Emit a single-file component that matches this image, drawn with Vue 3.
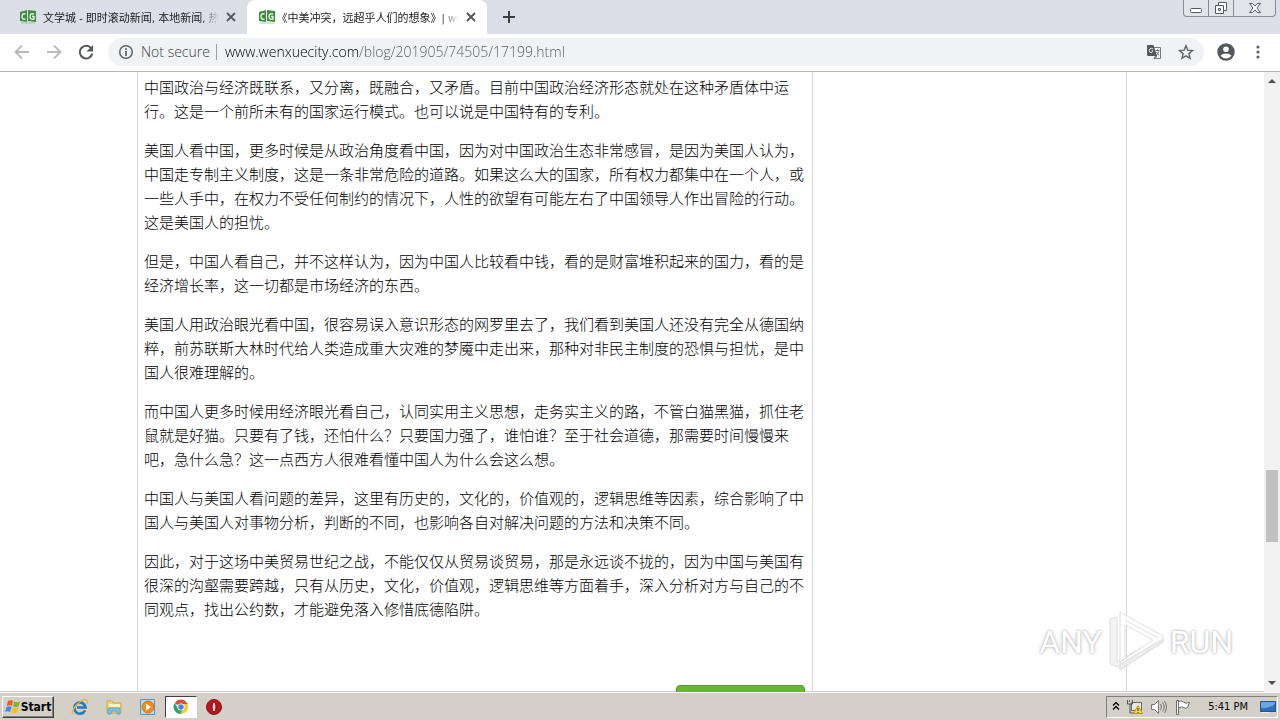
<script setup>
import { ref } from 'vue'

const url = ref('www.wenxuecity.com/blog/201905/74505/17199.html')
const tabs = [
  { title: '文学城 - 即时滚动新闻, 本地新闻, 热', active: false },
  { title: '《中美冲突，远超乎人们的想象》| ww', active: true },
]
const paragraphs = [
  '中国政治与经济既联系，又分离，既融合，又矛盾。目前中国政治经济形态就处在这种矛盾体中运行。这是一个前所未有的国家运行模式。也可以说是中国特有的专利。',
  '美国人看中国，更多时候是从政治角度看中国，因为对中国政治生态非常感冒，是因为美国人认为，中国走专制主义制度，这是一条非常危险的道路。如果这么大的国家，所有权力都集中在一个人，或一些人手中，在权力不受任何制约的情况下，人性的欲望有可能左右了中国领导人作出冒险的行动。这是美国人的担忧。',
  '但是，中国人看自己，并不这样认为，因为中国人比较看中钱，看的是财富堆积起来的国力，看的是经济增长率，这一切都是市场经济的东西。',
  '美国人用政治眼光看中国，很容易误入意识形态的网罗里去了，我们看到美国人还没有完全从德国纳粹，前苏联斯大林时代给人类造成重大灾难的梦魇中走出来，那种对非民主制度的恐惧与担忧，是中国人很难理解的。',
  '而中国人更多时候用经济眼光看自己，认同实用主义思想，走务实主义的路，不管白猫黑猫，抓住老鼠就是好猫。只要有了钱，还怕什么？只要国力强了，谁怕谁？至于社会道德，那需要时间慢慢来吧，急什么急？这一点西方人很难看懂中国人为什么会这么想。',
  '中国人与美国人看问题的差异，这里有历史的，文化的，价值观的，逻辑思维等因素，综合影响了中国人与美国人对事物分析，判断的不同，也影响各自对解决问题的方法和决策不同。',
  '因此，对于这场中美贸易世纪之战，不能仅仅从贸易谈贸易，那是永远谈不拢的，因为中国与美国有很深的沟壑需要跨越，只有从历史，文化，价值观，逻辑思维等方面着手，深入分析对方与自己的不同观点，找出公约数，才能避免落入修惜底德陷阱。',
]
</script>

<template>
  <div class="screen" lang="zh-CN">
    <header class="tabstrip">
      <div v-for="t in tabs" :key="t.title" class="tab" :class="{ active: t.active }">
        <svg class="favicon" width="16" height="14" viewBox="0 0 16 14" aria-hidden="true">
          <path d="M0 2 7 0v12l-7-1zM8 0l8 1v11l-8-1z" fill="#3f8d45" />
          <path d="M5.500 4Q2 3 2 6.500T5.500 9M14 4q-4-1-4 2.500T14 9V6.500h-2" fill="none" stroke="#e5f4df" stroke-width="1.400" />
          <path d="M1 13h14" stroke="#a9c9a5" />
        </svg>
        <button class="tab-title">{{ t.title }}</button>
        <button class="close" aria-label="Close tab">
          <svg width="10" height="10" viewBox="0 0 10 10"><path d="m1 1 8 8M9 1 1 9" stroke="#54585d" stroke-width="1.800" /></svg>
        </button>
      </div>
      <button class="newtab" aria-label="New tab">
        <svg width="14" height="14" viewBox="0 0 14 14"><path d="M7 1v12M1 7h12" stroke="#3c4043" stroke-width="2" /></svg>
      </button>
      <div class="caption">
        <button aria-label="Minimize"><svg width="14" height="16" viewBox="0 0 14 16"><rect x="1.500" y="8.500" width="11" height="4" rx="1" fill="#fff" stroke="#52586a" /></svg></button>
        <button aria-label="Restore"><svg width="14" height="16" viewBox="0 0 14 16"><path d="M4.500 2.500h8v8h-8z" fill="#fff" stroke="#52586a" /><path d="M1.500 5.500h8v8h-8z" fill="#fff" stroke="#52586a" /><path d="M4.500 8.500h2v2h-2z" fill="none" stroke="#52586a" /></svg></button>
        <button class="wide" aria-label="Close"><svg width="14" height="16" viewBox="0 0 14 16"><path d="M1.500 3.500h3L7 6l2.500-2.500h3L9 8l3.500 4.500h-3L7 10l-2.500 2.500h-3L5 8z" fill="#fff" stroke="#52586a" /></svg></button>
      </div>
    </header>

    <nav class="toolbar">
      <button class="nav" aria-label="Back"><svg width="16" height="16" viewBox="0 0 16 16"><path d="M15 8H2M8 1.500 1.500 8 8 14.500" fill="none" stroke="#b8babd" stroke-width="1.800" /></svg></button>
      <button class="nav" aria-label="Forward"><svg width="16" height="16" viewBox="0 0 16 16"><path d="M1 8h13M8 1.500 14.500 8 8 14.500" fill="none" stroke="#b8babd" stroke-width="1.800" /></svg></button>
      <button class="nav" aria-label="Reload"><svg width="16" height="16" viewBox="0 0 16 16"><path d="M13.300 4.500A6.300 6.300 0 1 0 14.300 9.500" fill="none" stroke="#55595e" stroke-width="2" /><path d="M15 1v6.500H8.500z" fill="#55595e" /></svg></button>
      <div class="omnibox">
        <svg width="16" height="16" viewBox="0 0 16 16" aria-hidden="true"><circle cx="8" cy="8" r="6.300" fill="none" stroke="#5f6368" stroke-width="1.500" /><path d="M8 7v5M8 4v1.700" stroke="#5f6368" stroke-width="1.700" /></svg>
        <label class="secure" for="url">Not secure</label>
        <input id="url" v-model="url" class="url" type="text" spellcheck="false" />
        <button class="tool" aria-label="Translate this page">
          <svg width="16" height="16" viewBox="0 0 16 16"><path d="M6.500 3.500h8v11H8.500" fill="#fff" stroke="#777b80" /><path d="M2 1h5.500l3.500 11H2Q1 12 1 11V2q0-1 1-1z" fill="#54585d" /><path d="M7 5Q5 3.500 3.800 5T4 8.300Q6 9.500 7 7H5.500" fill="none" stroke="#e6e8ea" /><path d="M9.500 6.500h4M11.500 5.500v1M13 7q-1 3-2.500 4M10.500 8l2.500 3.500M8 15l1-2.500h2z" fill="none" stroke="#777b80" /></svg>
        </button>
        <button class="tool" aria-label="Bookmark this page">
          <svg width="16" height="16" viewBox="0 0 16 16"><path d="m8 1.700 1.800 4.400 4.800.4-3.700 3.100 1.200 4.700L8 11.800l-4.100 2.500 1.200-4.700-3.700-3.100 4.800-.4z" fill="none" stroke="#5f6368" stroke-width="1.400" /></svg>
        </button>
      </div>
      <button class="profile" aria-label="Profile">
        <svg width="18" height="18" viewBox="0 0 18 18"><circle cx="9" cy="9" r="8.700" fill="#54585d" /><circle cx="9" cy="6.300" r="2.800" fill="#fff" /><path d="M3.500 12.800q2-2.200 5.500-2.200t5.500 2.200Q12.500 15.500 9 15.500t-5.500-2.700z" fill="#fff" /></svg>
      </button>
      <button class="menu" aria-label="Menu">
        <svg width="4" height="16" viewBox="0 0 4 16" fill="#5f6368"><circle cx="2" cy="3" r="1.600" /><circle cx="2" cy="8" r="1.600" /><circle cx="2" cy="13" r="1.600" /></svg>
      </button>
    </nav>

    <div class="viewport">
      <main class="page">
        <div class="container">
          <article class="article">
            <p v-for="(p, i) in paragraphs" :key="i">{{ p }}</p>
            <div class="action-row"><button class="green" aria-label="More"></button></div>
          </article>
          <aside class="aside"></aside>
        </div>
      </main>
      <div class="scrollbar">
        <svg width="16" height="16" viewBox="0 0 16 16"><path d="m4 11 4-4 4 4z" fill="#505050" /></svg>
        <div class="track"><div class="thumb"></div></div>
        <svg width="16" height="16" viewBox="0 0 16 16"><path d="m4 5 4 4 4-4z" fill="#505050" /></svg>
      </div>
      <div class="watermark">
        <span>ANY</span>
        <svg width="58" height="64" viewBox="0 0 58 64" aria-hidden="true">
          <g fill="#fff" stroke="#d8d8d8" stroke-linejoin="round">
            <path d="M3 9 10 7v45l20-12 23-12v5L11 57l-8-3z" fill="#f1f1f1" />
            <path d="M13 2 56 26v6L13 60v-8l33-22-28-15v34l-5 3z" />
            <path d="m18 10 33 18" fill="none" />
            <path d="m13 60 43-28v-3L13 54z" fill="#e8e8e8" />
          </g>
        </svg>
        <span>RUN</span>
      </div>
    </div>

    <footer class="taskbar">
      <button class="start">
        <svg width="16" height="16" viewBox="0 0 16 16" aria-hidden="true"><path d="M3 2q3-1.500 5 0L6.800 7q-2-1.500-5 0z" fill="#ec5b28" /><path d="M9 2.500q3 1.500 6 0L13.500 7.500q-3 1.500-5.500 0z" fill="#7cb82f" /><path d="M1.500 8q3-1.500 5 0l-1.300 5q-2-1.500-5 0z" fill="#3a8de0" /><path d="M7.700 8.500q3 1.500 5.700 0L12 13.500q-3 1.500-5.500 0z" fill="#f9bd1c" /></svg>
        Start
      </button>
      <div class="apps">
        <button class="app" aria-label="Internet Explorer">
          <svg width="18" height="18" viewBox="0 0 18 18"><path d="M14 12.500A5.600 5.600 0 1 1 14.500 9.500H6" fill="none" stroke="#1c7cc4" stroke-width="2.700" /><path d="M2 16Q-.5 14 5.500 7T16 2q1.500 1-.7 4" fill="none" stroke="#e9b72f" stroke-width="1.300" /></svg>
        </button>
        <button class="app" aria-label="Windows Explorer">
          <svg width="18" height="18" viewBox="0 0 18 18"><path d="M2 3h5l1 2h8v10H2z" fill="#efd576" stroke="#cba943" /><path d="M4 6h11v3H4z" fill="#fff4bc" /><path d="M3 16v-5q0-1 1-1h10q1 0 1 1v5h-3v-3H6v3z" fill="#82c3e3" stroke="#5a9fc5" /></svg>
        </button>
        <button class="app" aria-label="Media Player">
          <svg width="18" height="18" viewBox="0 0 18 18"><path d="M1.500 1.500h14v15h-14z" fill="#b9dcf5" stroke="#5397cc" /><circle cx="9" cy="9" r="6" fill="#f28b1d" stroke="#d87412" /><path d="m7 5.500 5 3.500-5 3.500z" fill="#fff" /></svg>
        </button>
        <button class="app pressed" aria-label="Chrome">
          <svg width="16" height="16" viewBox="0 0 16 16"><path d="M8 8 1.700 4.200A7 7 0 0 1 14.500 5H8z" fill="#dd4b3c" /><path d="M8 5h6.500A7 7 0 0 1 7.500 15L11 9.500z" fill="#f7c92d" /><path d="M1.700 4.200A7 7 0 0 0 7.500 15l3.300-5.500L5 9z" fill="#37a35a" /><circle cx="8" cy="8" r="3.500" fill="#fff" /><circle cx="8" cy="8" r="2.700" fill="#4285e8" /></svg>
        </button>
        <button class="app" aria-label="Opera">
          <svg width="18" height="18" viewBox="0 0 18 18"><circle cx="9" cy="9" r="7.500" fill="#b9151c" stroke="#8f1116" /><ellipse cx="9" cy="9" rx="2" ry="5" fill="#e9d6d2" stroke="#740b10" /></svg>
        </button>
      </div>
      <div class="tray">
        <button aria-label="Show hidden icons"><svg width="8" height="10" viewBox="0 0 8 10"><path d="m1 3.500 3-3 3 3M1 7.500l3-3 3 3" fill="none" stroke="#000" stroke-width="1.300" /></svg></button>
        <button aria-label="Network"><svg width="18" height="16" viewBox="0 0 18 16"><path d="M5.500 3.500h10v8h-10z" fill="#e8e8e4" stroke="#666" /><path d="M1.500 1v4h5V1M4 5v9h4M3.500 1v2" fill="none" stroke="#555" /><path d="m12 6.500 4.500 8h-9z" fill="#ffe12b" stroke="#b49b13" /><path d="M12 9v3m0 1v1" stroke="#222" /></svg></button>
        <button aria-label="Volume"><svg width="18" height="16" viewBox="0 0 18 16"><path d="M1.500 5.500h3l4-4v13l-4-4h-3z" fill="#fff" stroke="#777" /><path d="M10.500 5q2 3 0 6M12.500 3.500q3.500 4.500 0 9M14.500 2q4 6 0 12" fill="none" stroke="#777" /></svg></button>
        <button aria-label="Action Center"><svg width="18" height="16" viewBox="0 0 18 16"><path d="M2.500 1.500h2v14h-2zM4.500 2.500q3-1.500 5 .5t6 .5l-2 5q-2 1.500-4 0t-5 .5z" fill="#fff" stroke="#6d6d6d" /></svg></button>
        <span class="clock">5:41 PM</span>
        <button class="desktop" aria-label="Show desktop"><svg width="16" height="14" viewBox="0 0 16 14"><path d="M.5 1.500h15v10H.5z" fill="#2c6fc0" stroke="#23528d" /><path d="M1 2h14v2Q9 9 1 8z" fill="#68a6e5" /><path d="M1 12.500h8" stroke="#e4edf5" /></svg></button>
      </div>
    </footer>
  </div>
</template>

<style>
html, body { margin: 0; overflow: hidden; }
</style>

<style scoped>
* { box-sizing: border-box; }
button { border: 0; padding: 0; margin: 0; background: none; font: inherit; color: inherit; display: flex; align-items: center; justify-content: center; flex: none; }
svg { display: block; flex: none; }
.screen { height: 100vh; display: flex; flex-direction: column; background: #fff; font-family: "Liberation Sans", "Noto Sans CJK SC", sans-serif; text-spacing-trim: space-all; }

.tabstrip { height: 34px; flex: none; display: flex; background: #dcdfe7; padding-left: 8px; }
.tab { width: 239px; display: flex; align-items: center; padding: 0 8px 0 12px; color: #202124; font: 11px "DejaVu Sans Condensed", "Noto Sans CJK SC", sans-serif; }
.tab.active { width: 240px; background: #fff; border-radius: 8px 8px 0 0; }
.favicon { margin-right: 7px; }
.tab .tab-title { flex: 1; min-width: 0; height: 34px; display: block; overflow: hidden; white-space: nowrap; text-align: left; text-spacing-trim: trim-start; mask-image: linear-gradient(90deg, #000 90%, transparent); }
.close { width: 16px; height: 16px; margin-left: 4px; }
.newtab { width: 28px; height: 34px; margin-left: 8px; }
.caption { margin: 0 4px 0 auto; height: 17px; display: flex; border: 1px solid #868b99; border-top: 0; border-radius: 0 0 4px 4px; overflow: hidden; background: #e2e4ea; }
.caption button { width: 25px; border-right: 1px solid #868b99; }
.caption .wide { width: 41px; border-right: 0; }

.toolbar { height: 38px; flex: none; display: flex; align-items: center; padding: 0 20px 2px 14px; border-bottom: 1px solid #b5b7b7; }
.nav { width: 16px; height: 28px; margin-right: 16px; }
.omnibox { flex: 1; min-width: 0; height: 28px; margin-left: -2px; padding: 0 10px; border-radius: 14px; background: #f0f3f6; display: flex; align-items: center; font: 300 14px "Open Sans", sans-serif; }
.secure { margin-left: 7px; padding-right: 6px; border-right: 1px solid #9b9fa4; line-height: 16px; color: #3c4043; white-space: nowrap; }
.url { flex: 1; min-width: 0; height: 24px; margin-left: 8px; padding: 0; border: 0; outline: 0; font: inherit; color: transparent; background: linear-gradient(90deg, #000 134px, #55595e 134px) text; }
.tool { width: 16px; height: 24px; margin-left: 16px; }
.profile { margin-left: 13px; }
.menu { margin-left: 21px; }

.viewport { flex: 1; min-height: 0; display: flex; position: relative; }
.page { flex: 1; min-width: 0; overflow: hidden; }
.container { max-width: 990px; min-height: 100%; margin: 0 auto; display: flex; border: 1px solid #d9d9d9; border-width: 0 1px; }
.article { flex: 0 1 675px; padding: 3px 7px 0 6px; border-right: 1px solid #d9d9d9; color: #000; font: 300 15px/24px "Noto Sans CJK SC", sans-serif; }
.article p { margin: 0 0 15px; }
.action-row { display: flex; justify-content: flex-end; padding-top: 49px; }
.green { width: 129px; height: 32px; border-radius: 4px; border: 1px solid #579a2c; background: #66b82e; }
.aside { flex: 1; }
.scrollbar { width: 16px; background: #f1f1f1; display: flex; flex-direction: column; }
.track { flex: 1; display: flex; flex-direction: column; padding: 382px 2px 0; }
.thumb { height: 72px; background: #c1c1c1; }
.watermark { position: absolute; right: 47px; bottom: 18px; display: flex; align-items: center; gap: 5px; font: 32px "Roboto", sans-serif; color: #fff; text-shadow: 0 0 2px #aaa, 0 0 4px #ccc; }
.watermark svg { opacity: 0.8; }

.taskbar { height: 28px; flex: none; display: flex; align-items: center; padding: 1px 2px 0; background: #d4d0c8; box-shadow: 0 -1px #d4d0c8, inset 0 1px #fff; color: #000; }
.start { height: 22px; width: 52px; font: bold 12px "DejaVu Sans Condensed", "Liberation Sans", sans-serif; border: 1px solid; border-color: #fff #404040 #404040 #fff; box-shadow: inset -1px -1px #808080; }
.apps { display: flex; margin-left: 9px; align-items: center; }
.app { width: 34px; height: 22px; }
.app.pressed { width: 32px; background: #fff; border: 1px solid; border-color: #404040 #fff #fff #404040; }
.tray { margin-left: auto; height: 22px; display: flex; align-items: center; gap: 6px; padding: 0 1px 0 5px; border: 1px solid; border-color: #808080 #fff #fff #808080; }
.clock { margin: 0 6px 0 10px; font: 11px "DejaVu Sans Condensed", sans-serif; white-space: nowrap; }
</style>
